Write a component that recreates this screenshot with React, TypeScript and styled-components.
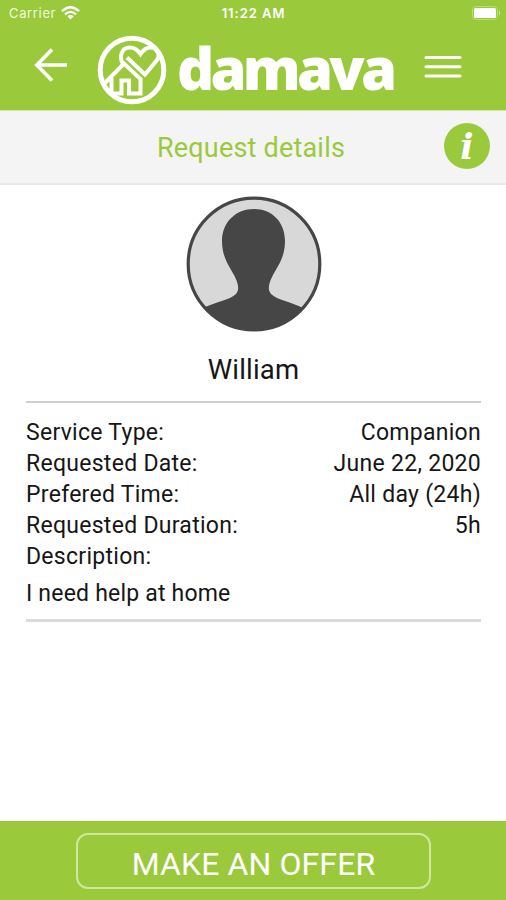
import React from "react";
import styled, { createGlobalStyle } from "styled-components";

const GREEN = "#9bc93c";

const GlobalStyle = createGlobalStyle`
  * { box-sizing: border-box; }
  html, body { margin: 0; background: #fff; }
  body { font-family: Roboto, "Liberation Sans", sans-serif; overflow: hidden; }
`;

const Screen = styled.div`
  width: 506px;
  height: 900px;
  display: flex;
  flex-direction: column;
  background: #fff;
  color: #161616;
`;

const Header = styled.header`
  flex: none;
  height: 110px;
  background: ${GREEN};
  color: #fff;
`;

const StatusBar = styled.div`
  height: 26px;
  padding: 0 5px 0 9px;
  display: grid;
  grid-template-columns: 1fr auto 1fr;
  align-items: center;
  font: 500 13px/26px Inter, sans-serif;
`;

const Carrier = styled.div`
  display: flex;
  align-items: center;
  gap: 5px;
  margin-top: -1px;
  font-weight: 400;
  letter-spacing: 0.65px;
  color: #f3fadf;
`;

const Clock = styled.div`
  margin: -1px 0 0 -3px;
  font-size: 13px;
  font-weight: 600;
  letter-spacing: 0.95px;
`;

const BatterySlot = styled.div`
  display: flex;
  justify-content: flex-end;
`;

const NavBar = styled.nav`
  height: 84px;
  padding: 0 44px 0 34px;
  display: flex;
  align-items: flex-start;
`;

const IconButton = styled.button<{ $top: number }>`
  display: flex;
  margin: ${(p) => p.$top}px 0 0;
  padding: 0;
  border: 0;
  background: none;
  color: #fff;
`;

const Brand = styled.div`
  flex: 1;
  display: flex;
  margin: 9px 0 0 29px;
`;

const Wordmark = styled.span`
  margin: -2px 0 0 10px;
  font: 900 58px/70px "Noto Sans", sans-serif;
  letter-spacing: -3.8px;
`;

const TitleBar = styled.div`
  flex: none;
  height: 75px;
  padding: 0 16px;
  display: grid;
  grid-template-columns: 46px 1fr 46px;
  align-items: center;
  background: #f4f4f4;
  border-top: 1px solid #d3e3b0;
  border-bottom: 2px solid #e9e9e9;
`;

const Title = styled.h1`
  margin: 2px 0 0 -4px;
  text-align: center;
  font-size: 27px;
  font-weight: 400;
  line-height: 32px;
  letter-spacing: 0.2px;
  color: ${GREEN};
`;

const InfoBadge = styled.button`
  width: 46px;
  height: 46px;
  margin-top: -2px;
  padding: 1px 0 0;
  border: 0;
  border-radius: 50%;
  background: ${GREEN};
  color: #fff;
  font: italic 700 35px/43px "DejaVu Serif", serif;
`;

const Content = styled.main`
  flex: 1;
  padding: 11px 25px 0 26px;
`;

const Profile = styled.section`
  display: flex;
  flex-direction: column;
  align-items: center;
  height: 207px;
  border-bottom: 2px solid #cfcfcf;
`;

const Name = styled.h2`
  margin: 21px 0 0;
  font-size: 27.5px;
  font-weight: 400;
  line-height: 34px;
  letter-spacing: 0.2px;
`;

const Details = styled.dl`
  margin: 0;
  padding: 14px 0 10px;
  border-bottom: 3px solid #dadada;
  font-size: 23px;
  letter-spacing: 0.28px;
`;

const DetailRow = styled.div`
  display: flex;
  justify-content: space-between;
  height: 31px;
  line-height: 31px;
`;

const Label = styled.dt``;

const Value = styled.dd`
  margin: 0;
`;

const Description = styled.p`
  margin: 6px 0 0;
  line-height: 31px;
  letter-spacing: 0.2px;
`;

const Footer = styled.footer`
  flex: none;
  height: 79px;
  padding: 12px 75px 0 76px;
  background: ${GREEN};
`;

const OfferButton = styled.button`
  width: 100%;
  height: 56px;
  padding: 5px 0 0;
  border: 2px solid #d0e79f;
  border-radius: 12px;
  background: none;
  color: #fff;
  font: 400 32px/40px Roboto, sans-serif;
  letter-spacing: 0.1px;
`;

const WifiIcon = () => (
  <svg width="19" height="14" viewBox="0 0 19 14" fill="none" stroke="#fff" strokeWidth="2.3">
    <path d="M1 5.2 Q9.5 -2.6 18 5.2" />
    <path d="M4 8.4 Q9.5 3.4 15 8.4" />
    <path d="M6.3 10.3 Q9.5 7.6 12.7 10.3 L9.5 13.5 Z" fill="#fff" stroke="none" />
  </svg>
);

const BatteryIcon = () => (
  <svg width="29" height="14" viewBox="0 0 29 14">
    <rect x="0.5" y="0.5" width="25" height="13" rx="3.5" fill="none" stroke="#b9da76" />
    <rect x="2" y="2" width="22" height="10" rx="1.5" fill="#fff" />
    <path d="M27 4.5 Q29 7 27 9.5Z" fill="#d8ebb0" />
  </svg>
);

const BackIcon = () => (
  <svg width="34" height="34" viewBox="0 0 34 34" fill="none" stroke="#fff" strokeWidth="3.6">
    <path d="M33 17 H3 M18 1.5 L2.8 17 L18 32.5" />
  </svg>
);

const MenuIcon = () => (
  <svg width="38" height="24" viewBox="0 0 38 24" stroke="#fff" strokeWidth="3" strokeLinecap="round">
    <path d="M2 2.5 H36 M2 11.8 H36 M2 21 H36" />
  </svg>
);

const HomeHeartLogo = () => (
  <svg width="70" height="70" viewBox="0 0 70 70" fill="none" stroke="#fff" strokeWidth="4">
    <circle cx="35" cy="35" r="31.8" strokeWidth="5" />
    <path d="M8 48 L27 28.5 L43.5 44 V58.5 H32 V45.5 H24.5 V58.5 H14.5 V43" />
    <path d="M26 29 C22 22 24 12.5 33 12.5 C38 12.5 41 15.5 43.5 19 C46 15.5 49 12.5 53.5 12.5 C61 12.5 63.5 20.5 60 25 L48 39.5 L30 22.5" />
  </svg>
);

const Avatar = () => (
  <svg width="136" height="136" viewBox="0 0 136 136">
    <defs>
      <clipPath id="avatar-disc">
        <circle cx="68" cy="68" r="66" />
      </clipPath>
    </defs>
    <circle cx="68" cy="68" r="66" fill="#d8d8d8" />
    <path
      clipPath="url(#avatar-disc)"
      fill="#464646"
      d="M68 13 C86 13 99 26 99 45 C99 61 92 70 87 79 C83 87 81 93 85 98 C91 104 106 106 117 112 L117 140 H17 V112 C29 106 44 104 50 98 C54 93 52 87 48 79 C43 70 36 61 36 45 C36 26 50 13 68 13 Z"
    />
    <circle cx="68" cy="68" r="65.8" fill="none" stroke="#464646" strokeWidth="3.2" />
  </svg>
);

const details = [
  { label: "Service Type:", value: "Companion" },
  { label: "Requested Date:", value: "June 22, 2020" },
  { label: "Prefered Time:", value: "All day (24h)" },
  { label: "Requested Duration:", value: "5h" },
  { label: "Description:", value: "" },
];

export default function App() {
  return (
    <>
      <GlobalStyle />
      <Screen>
        <Header>
          <StatusBar>
            <Carrier>
              Carrier
              <WifiIcon />
            </Carrier>
            <Clock>11:22 AM</Clock>
            <BatterySlot>
              <BatteryIcon />
            </BatterySlot>
          </StatusBar>
          <NavBar>
            <IconButton $top={22} aria-label="Back">
              <BackIcon />
            </IconButton>
            <Brand>
              <HomeHeartLogo />
              <Wordmark>damava</Wordmark>
            </Brand>
            <IconButton $top={29} aria-label="Menu">
              <MenuIcon />
            </IconButton>
          </NavBar>
        </Header>
        <TitleBar>
          <span />
          <Title>Request details</Title>
          <InfoBadge aria-label="Information">i</InfoBadge>
        </TitleBar>
        <Content>
          <Profile>
            <Avatar />
            <Name>William</Name>
          </Profile>
          <Details>
            {details.map((d) => (
              <DetailRow key={d.label}>
                <Label>{d.label}</Label>
                {d.value && <Value>{d.value}</Value>}
              </DetailRow>
            ))}
            <Description>I need help at home</Description>
          </Details>
        </Content>
        <Footer>
          <OfferButton>MAKE AN OFFER</OfferButton>
        </Footer>
      </Screen>
    </>
  );
}
